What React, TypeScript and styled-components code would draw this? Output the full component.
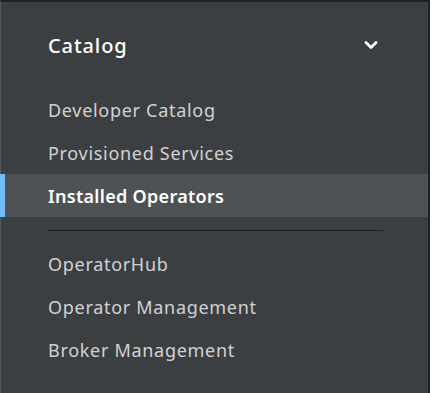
import styled, { createGlobalStyle } from "styled-components";

const GlobalStyle = createGlobalStyle`
  html, body {
    margin: 0;
    padding: 0;
    background: #ffffff;
  }
  body {
    font-family: "Noto Sans", "Open Sans", sans-serif;
  }
`;

interface NavItemData {
  label: string;
  active?: boolean;
}

const topItems: NavItemData[] = [
  { label: "Developer Catalog" },
  { label: "Provisioned Services" },
  { label: "Installed Operators", active: true },
];

const bottomItems: NavItemData[] = [
  { label: "OperatorHub" },
  { label: "Operator Management" },
  { label: "Broker Management" },
];

export default function App() {
  return (
    <>
      <GlobalStyle />
      <Sidebar>
        <SectionToggle>
          <SectionTitle>Catalog</SectionTitle>
          <Chevron viewBox="0 0 14 10" aria-hidden>
            <path
              d="M2 2.5 L7 7.5 L12 2.5"
              fill="none"
              stroke="#ffffff"
              strokeWidth="2.8"
              strokeLinecap="round"
              strokeLinejoin="round"
            />
          </Chevron>
        </SectionToggle>

        <NavList>
          {topItems.map((item) => (
            <NavItem key={item.label} $active={item.active}>
              {item.label}
            </NavItem>
          ))}
        </NavList>

        <Divisor />

        <NavList>
          {bottomItems.map((item) => (
            <NavItem key={item.label}>{item.label}</NavItem>
          ))}
        </NavList>
      </Sidebar>
    </>
  );
}

const Sidebar = styled.nav`
  box-sizing: border-box;
  width: 430px;
  height: 393px;
  background: #3c3f42;
  border-top: 2px solid #1e2022;
  border-right: 2px solid #1e2022;
  border-left: 1px solid #54575a;
  padding-top: 23px;
  display: flex;
  flex-direction: column;
`;

const SectionToggle = styled.div`
  display: flex;
  align-items: center;
  justify-content: space-between;
  height: 40px;
  padding: 0 50px 0 47px;
  margin-bottom: 23px;
`;

const SectionTitle = styled.span`
  color: #ffffff;
  font-size: 20px;
  font-weight: 500;
  letter-spacing: 0.9px;
`;

const Chevron = styled.svg`
  width: 14px;
  height: 10px;
`;

const NavList = styled.ul`
  list-style: none;
  margin: 0;
  padding: 0;
`;

const NavItem = styled.li<{ $active?: boolean }>`
  position: relative;
  height: 43px;
  display: flex;
  align-items: center;
  padding-left: 47px;
  font-size: 18px;
  letter-spacing: ${({ $active }) => ($active ? "0.3px" : "0.7px")};
  font-weight: ${({ $active }) => ($active ? 600 : 400)};
  color: ${({ $active }) => ($active ? "#ffffff" : "#d2d2d2")};
  background: ${({ $active }) => ($active ? "#4f5255" : "transparent")};

  &::before {
    content: "";
    display: ${({ $active }) => ($active ? "block" : "none")};
    position: absolute;
    left: -1px;
    top: 0;
    bottom: 0;
    width: 5px;
    background: #73bcf7;
  }
`;

const Divisor = styled.div`
  height: 1px;
  background: #1e2022;
  margin: 13px 45px 11px 47px;
`;
